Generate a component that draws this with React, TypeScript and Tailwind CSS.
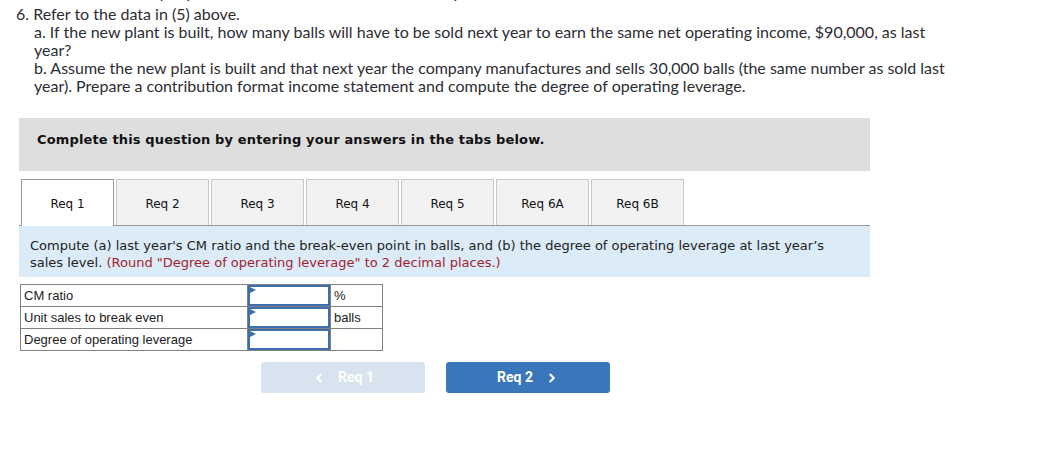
import { ChevronLeft, ChevronRight } from "lucide-react";

const tabs = ["Req 1", "Req 2", "Req 3", "Req 4", "Req 5", "Req 6A", "Req 6B"];

const rows = [
  { label: "CM ratio", unit: "%" },
  { label: "Unit sales to break even", unit: "balls" },
  { label: "Degree of operating leverage", unit: "" },
];

export default function App() {
  return (
    <div className="h-[451px] w-[1043px] overflow-hidden bg-white">
      {/* Question text */}
      <div className="text-[16px] leading-[18px] text-[#2d2d33] font-['Lato',sans-serif] -mt-[17px] whitespace-nowrap">
        <div className="h-[22px] pl-[34px]">would be the company's new CM ratio and new break-even point in balls?</div>
        <div className="pl-[16px]">6. Refer to the data in (5) above.</div>
        <div className="pl-[34px]">
          a. If the new plant is built, how many balls will have to be sold next year to earn the same net operating income, $90,000, as last
          <br />
          year?
          <br />
          b. Assume the new plant is built and that next year the company manufactures and sells 30,000 balls (the same number as sold last
          <br />
          year). Prepare a contribution format income statement and compute the degree of operating leverage.
        </div>
      </div>

      <div className="ml-[19px] w-[851px] font-['DejaVu_Sans',sans-serif]">
        {/* Instructions */}
        <div className="mt-[23px] h-[53px] bg-[#dedede] pl-[18px] pt-[14px] text-[13px] leading-[16px] font-bold tracking-[0.14px] text-[#111]">
          Complete this question by entering your answers in the tabs below.
        </div>

        {/* Tabs */}
        <div className="mt-[8px] flex items-end gap-[2px] border-b border-[#999] pl-[2px]">
          {tabs.map((t, i) => (
            <div
              key={t}
              className={
                i === 0
                  ? "h-[47px] w-[93px] -mb-px flex items-center justify-center border border-b-0 border-[#999] bg-white pt-[2px] text-[12px] text-[#111]"
                  : "h-[46px] w-[93px] flex items-center justify-center border border-b-0 border-[#c8c8c8] bg-[#f2f2f2] pt-[2px] text-[12px] text-[#111]"
              }
            >
              {t}
            </div>
          ))}
        </div>

        {/* Prompt */}
        <div className="h-[51px] bg-[#dbebf8] px-[11px] pt-[11px] text-[13px] leading-[17px] text-[#222]">
          Compute (a) last year's CM ratio and the break-even point in balls, and (b) the degree of operating leverage at last year’s
          <br />
          sales level. <span className="text-[#a3232e]">(Round "Degree of operating leverage" to 2 decimal places.)</span>
        </div>

        {/* Answer table */}
        <table className="mt-[7px] ml-[1px] border-collapse font-['Liberation_Sans',sans-serif] text-[13px] text-[#222]">
          <tbody>
            {rows.map((r) => (
              <tr key={r.label} className="h-[22px]">
                <td className="w-[227px] border border-[#808080] px-[3px] py-0">{r.label}</td>
                <td className="w-[83px] border border-[#808080] p-0">
                  <div className="relative h-[21px] border-2 border-[#3d6fae]">
                    <svg className="absolute left-0 top-0" width="7" height="7" viewBox="0 0 7 7">
                      <polygon points="0,0 6,3 0,6" fill="#3d6fae" />
                    </svg>
                  </div>
                </td>
                <td className="w-[52px] border border-[#808080] px-[3px] py-0">{r.unit}</td>
              </tr>
            ))}
          </tbody>
        </table>

        {/* Navigation */}
        <div className="mt-[11px] ml-[242px] flex gap-[21px] font-['Roboto',sans-serif] text-[14px] font-bold text-white">
          <div className="h-[31px] w-[164px] rounded-[3px] bg-[#d8e3f0] flex items-center justify-center gap-[12px]">
            <ChevronLeft size={14} strokeWidth={3.5} />
            Req 1
          </div>
          <div className="h-[31px] w-[164px] rounded-[3px] bg-[#3a76ba] flex items-center justify-center gap-[12px]">
            Req 2
            <ChevronRight size={14} strokeWidth={3.5} />
          </div>
        </div>
      </div>
    </div>
  );
}
